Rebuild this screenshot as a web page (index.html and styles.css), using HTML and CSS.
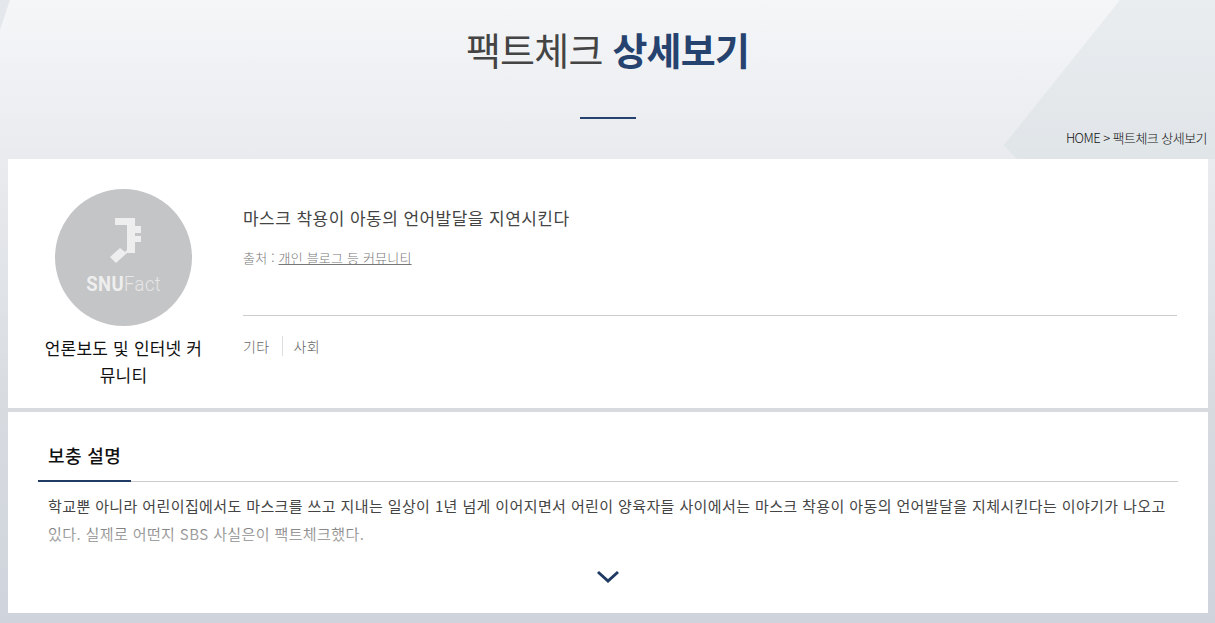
FILE: index.html
```html
<!DOCTYPE html>
<html lang="ko">
<head>
    <meta charset="UTF-8">
    <meta name="viewport" content="width=device-width, initial-scale=1.0">
    <title>팩트체크 상세보기</title>
    <link rel="stylesheet" href="styles.css">
</head>
<body>
    <svg class="bg-shapes" width="1215" height="159" viewBox="0 0 1215 159" aria-hidden="true">
        <polygon points="0,0 10,0 0,30" fill="#e4e8ec"></polygon>
        <polygon points="1120,0 1215,0 1215,159 1017,159 1004,145" fill="#c8d2d7" fill-opacity="0.25"></polygon>
    </svg>
    <header class="page-head">
        <h1 class="page-title">팩트체크 <strong>상세보기</strong></h1>
        <div class="title-bar"></div>
        <div class="breadcrumb">HOME &gt; 팩트체크 상세보기</div>
    </header>

    <main class="container">
        <section class="card summary">
            <div class="author">
                <div class="logo">
                    <svg class="logo-mark" width="31" height="45" viewBox="0 0 31 45" aria-hidden="true">
                        <polygon points="5,0 25,0 25,8 31,8 31,15 25,15 25,18 31,18 31,24 25,24 25,35 17,35 6,45 0,39 10,30 15,34 17,32 17,7 5,7" fill="#eeeeee"></polygon>
                    </svg>
                    <div class="logo-name"><b>SNU</b>Fact</div>
                </div>
                <p class="author-name">언론보도 및 인터넷 커뮤니티</p>
            </div>
            <div class="claim">
                <h2 class="claim-title">마스크 착용이 아동의 언어발달을 지연시킨다</h2>
                <p class="claim-source">출처 : <a href="#">개인 블로그 등 커뮤니티</a></p>
                <ul class="tags">
                    <li>기타</li>
                    <li>사회</li>
                </ul>
            </div>
        </section>

        <section class="card detail">
            <div class="tab-line">
                <h3 class="tab">보충 설명</h3>
            </div>
            <div class="detail-text">
                <p>학교뿐 아니라 어린이집에서도 마스크를 쓰고 지내는 일상이 1년 넘게 이어지면서 어린이 양육자들 사이에서는 마스크 착용이 아동의 언어발달을 지체시킨다는 이야기가 나오고 있다. 실제로 어떤지 SBS 사실은이 팩트체크했다.</p>
                <div class="fade"></div>
            </div>
            <button class="more" type="button" aria-label="더보기">
                <svg width="24" height="14" viewBox="0 0 24 14" aria-hidden="true">
                    <polyline points="2,2 12,11 22,2" fill="none" stroke="#1f3a63" stroke-width="3"></polyline>
                </svg>
            </button>
        </section>
    </main>
</body>
</html>
```

FILE: styles.css
```css
* {
    box-sizing: border-box;
}

html {
    height: 100%;
}

body {
    position: relative;
    margin: 0;
    min-height: 623px;
    overflow: hidden;
    background: linear-gradient(to bottom, #f5f6f8 0%, #e9ebee 25%, #d7dbe0 66%, #cfd4dc 100%);
    font-family: "Noto Sans CJK KR", "Noto Sans", sans-serif;
    color: #333;
}

.bg-shapes {
    position: absolute;
    top: 0;
    left: 0;
}

.page-head {
    position: relative;
    height: 159px;
    text-align: center;
}

.page-title {
    margin: 0;
    padding-top: 23px;
    font-size: 38px;
    line-height: 52px;
    font-weight: 400;
    letter-spacing: -0.8px;
    color: #444;
}

.page-title strong {
    font-weight: 700;
    color: #26426f;
}

.title-bar {
    width: 56px;
    height: 2px;
    margin: 42px auto 0;
    background-color: #26426f;
}

.breadcrumb {
    position: absolute;
    right: 8px;
    bottom: 12px;
    font-size: 13px;
    line-height: 18px;
    font-weight: 300;
    letter-spacing: -0.55px;
    color: #111;
}

.container {
    width: 1200px;
    margin-left: 8px;
}

.card {
    background-color: white;
}

.summary {
    display: flex;
    height: 249px;
    padding: 30px 31px 0 30px;
}

.author {
    width: 171px;
    text-align: center;
}

.logo {
    display: flex;
    flex-direction: column;
    align-items: center;
    width: 137px;
    height: 137px;
    margin: 0 auto;
    padding-top: 29px;
    border-radius: 50%;
    background-color: #c4c5c7;
}

.logo-mark {
    margin-left: 4px;
}

.logo-name {
    margin-top: 9px;
    font-family: Roboto, sans-serif;
    font-size: 20px;
    line-height: 24px;
    font-weight: 300;
    letter-spacing: 0.5px;
    color: #e6e6e6;
    transform: scaleX(0.92);
}

.logo-name b {
    font-weight: 700;
    color: #eeeeee;
}

.author-name {
    margin: 8px 0 0;
    font-size: 17px;
    line-height: 27px;
    letter-spacing: 0.2px;
    color: #111;
}

.claim {
    flex: 1;
    margin-left: 34px;
}

.claim-title {
    margin: 0;
    padding-top: 17px;
    font-size: 17px;
    line-height: 24px;
    font-weight: 400;
    letter-spacing: 0.45px;
    color: #444;
}

.claim-source {
    height: 68px;
    margin: 18px 0 0;
    border-bottom: 1px solid #cccccc;
    font-size: 13px;
    line-height: 20px;
    font-weight: 300;
    letter-spacing: 0.2px;
    color: #777;
}

.claim-source a {
    color: #777;
}

.tags {
    display: flex;
    margin: 20px 0 0;
    padding: 0;
    list-style: none;
    font-size: 14px;
    line-height: 20px;
    font-weight: 300;
    letter-spacing: 0.4px;
    color: #666;
}

.tags li + li {
    margin-left: 12px;
    padding-left: 11px;
    border-left: 1px solid #dddddd;
}

.detail {
    height: 201px;
    margin-top: 4px;
    padding: 31px 30px 0;
}

.tab-line {
    border-bottom: 1px solid #cccccc;
}

.tab {
    width: 93px;
    margin: 0 0 -1px;
    padding: 0 10px 12px;
    border-bottom: 2px solid #1f3a63;
    font-size: 18px;
    line-height: 25px;
    font-weight: 500;
    letter-spacing: 0.4px;
    white-space: nowrap;
    color: #111;
}

.detail-text {
    position: relative;
    margin-top: 10px;
    padding: 0 10px;
}

.detail-text p {
    margin: 0;
    font-size: 15px;
    line-height: 28px;
    letter-spacing: 0.39px;
    color: #444;
}

.fade {
    position: absolute;
    left: 0;
    right: 0;
    top: 0;
    height: 56px;
    background: linear-gradient(to bottom, rgba(255, 255, 255, 0) 45%, rgba(255, 255, 255, 0.5) 75%);
}

.more {
    display: block;
    margin: 22px auto 0;
    padding: 0;
    border: none;
    background: none;
    cursor: pointer;
}
```
